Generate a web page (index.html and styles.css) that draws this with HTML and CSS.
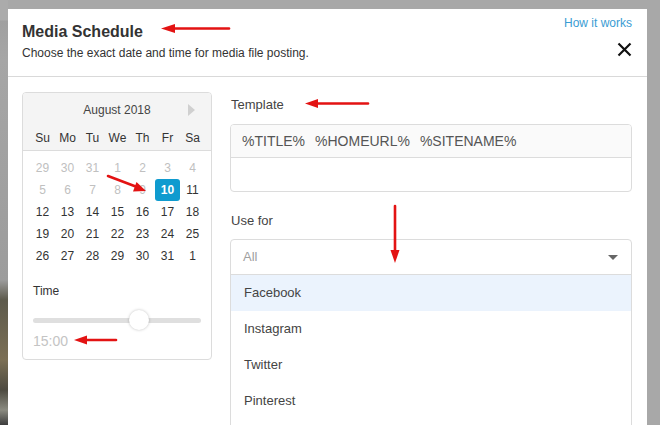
FILE: index.html
```html
<!DOCTYPE html>
<html>
<head>
<meta charset="utf-8">
<link rel="stylesheet" href="styles.css">
</head>
<body>
<div class="screen">
  <div class="backdrop-strip"></div>
  <div class="modal">
    <div class="modal-header">
      <div class="heading">
        <h1 class="title">Media Schedule</h1>
        <p class="subtitle">Choose the exact date and time for media file posting.</p>
      </div>
      <div class="header-actions">
        <a class="help-link">How it works</a>
        <svg class="close" width="15" height="15" viewBox="0 0 15 15"><path d="M1.5 1.5 L13.5 13.5 M13.5 1.5 L1.5 13.5" stroke="#111" stroke-width="2.2" fill="none"/></svg>
      </div>
    </div>
    <div class="modal-body">
      <div class="calendar">
        <div class="cal-head">
          <div class="cal-month">August 2018<span class="cal-next"></span></div>
          <div class="cal-row cal-dow">
            <span>Su</span><span>Mo</span><span>Tu</span><span>We</span><span>Th</span><span>Fr</span><span>Sa</span>
          </div>
        </div>
        <div class="cal-days">
          <div class="cal-row"><span class="muted">29</span><span class="muted">30</span><span class="muted">31</span><span class="muted">1</span><span class="muted">2</span><span class="muted">3</span><span class="muted">4</span></div>
          <div class="cal-row"><span class="muted">5</span><span class="muted">6</span><span class="muted">7</span><span class="muted">8</span><span class="muted">9</span><span class="selected">10</span><span>11</span></div>
          <div class="cal-row"><span>12</span><span>13</span><span>14</span><span>15</span><span>16</span><span>17</span><span>18</span></div>
          <div class="cal-row"><span>19</span><span>20</span><span>21</span><span>22</span><span>23</span><span>24</span><span>25</span></div>
          <div class="cal-row"><span>26</span><span>27</span><span>28</span><span>29</span><span>30</span><span>31</span><span>1</span></div>
        </div>
        <div class="time">
          <div class="time-label">Time</div>
          <div class="slider"><div class="track"></div><div class="thumb"></div></div>
          <div class="time-value">15:00</div>
        </div>
      </div>
      <div class="form">
        <div class="field-label">Template</div>
        <div class="template-box">
          <div class="template-tags"><span>%TITLE%</span><span>%HOMEURL%</span><span>%SITENAME%</span></div>
          <div class="template-input"></div>
        </div>
        <div class="field-label use-for">Use for</div>
        <div class="select">
          <div class="select-value">All<span class="caret"></span></div>
          <ul class="options">
            <li class="active">Facebook</li>
            <li>Instagram</li>
            <li>Twitter</li>
            <li>Pinterest</li>
          </ul>
        </div>
      </div>
    </div>
  </div>
  <svg class="annotations" width="660" height="425" viewBox="0 0 660 425">
    <g stroke="#e31313" stroke-width="2.6" fill="#e31313" stroke-linecap="round">
      <line x1="229" y1="28.5" x2="172" y2="28.5"/>
      <polygon points="161,28.5 175,24 175,33" stroke="none"/>
      <line x1="108" y1="176" x2="137" y2="187"/>
      <polygon points="146,191 133,191.5 136.5,182" stroke="none"/>
      <line x1="116" y1="340" x2="84" y2="340"/>
      <polygon points="74,340 87,335.5 87,344.5" stroke="none"/>
      <line x1="368" y1="103.5" x2="315" y2="103.5"/>
      <polygon points="305,103.5 318,99 318,108" stroke="none"/>
      <line x1="395" y1="206" x2="395" y2="252"/>
      <polygon points="395,263 390.5,250 399.5,250" stroke="none"/>
    </g>
  </svg>
</div>
</body>
</html>
```
FILE: styles.css
```css
* { box-sizing: border-box; }
html, body { margin: 0; padding: 0; }
body {
  width: 660px;
  height: 425px;
  overflow: hidden;
  background: #a8a8a8;
  font-family: "Liberation Sans", Arial, sans-serif;
  color: #333;
}
.screen {
  position: relative;
  display: flex;
  width: 660px;
  height: 425px;
  padding-top: 9px;
}
.backdrop-strip {
  width: 8px;
  margin-top: -9px;
  background: linear-gradient(to bottom, #ababab 0, #ababab 20px, #a0a0a0 21px, #a6a6a6 60px, #9c9c9c 280px, #5d5a4c 300px, #7b6f55 360px, #4d4a40 390px, #8a8a80 410px, #3c3c3c 425px);
}
.modal {
  width: 639px;
  height: 416px;
  background: #fff;
  overflow: hidden;
}
.modal-header {
  display: flex;
  justify-content: space-between;
  height: 68px;
  padding: 13px 15px 0 14px;
  border-bottom: 1px solid #d9d9d9;
}
.title {
  margin: 0;
  font-size: 16px;
  font-weight: bold;
  color: #333;
  line-height: 19px;
}
.subtitle {
  margin: 5px 0 0;
  font-size: 12px;
  color: #333;
  line-height: 14px;
}
.header-actions {
  display: flex;
  flex-direction: column;
  align-items: flex-end;
}
.help-link {
  font-size: 12px;
  color: #3a9cd3;
  line-height: 14px;
  margin-top: -6px;
}
.close { margin-top: 12px; }

.modal-body {
  display: flex;
  gap: 18px;
  padding: 15px 15px 0 14px;
}
.calendar {
  width: 190px;
  height: 268px;
  border: 1px solid #dcdcdc;
  border-radius: 4px;
  flex-shrink: 0;
  overflow: hidden;
}
.cal-head {
  background: #f4f4f4;
  border-bottom: 1px solid #dcdcdc;
  padding: 0 7px;
}
.cal-month {
  position: relative;
  height: 34px;
  line-height: 34px;
  text-align: center;
  font-size: 12px;
  color: #444;
}
.cal-next {
  position: absolute;
  right: 9px;
  top: 11px;
  width: 0; height: 0;
  border-top: 6.5px solid transparent;
  border-bottom: 6.5px solid transparent;
  border-left: 7px solid #d0d0d0;
}
.cal-row {
  display: grid;
  grid-template-columns: repeat(7, 25px);
}
.cal-row span {
  height: 22px;
  line-height: 22px;
  text-align: center;
  font-size: 12px;
  color: #333;
}
.cal-dow { height: 23px; }
.cal-dow span { color: #333; }
.cal-days { padding: 6px 7px 0; }
.cal-row span.muted { color: #c0c0c0; }
.cal-row span.selected {
  background: #0f9bcf;
  color: #fff;
  font-weight: bold;
  border-radius: 3px;
}
.time { padding: 17px 10px 0 10px; }
.time-label {
  font-size: 12px;
  color: #333;
  line-height: 14px;
}
.slider {
  position: relative;
  height: 20px;
  margin-top: 12px;
}
.track {
  position: absolute;
  left: 0; right: 0;
  top: 8px;
  height: 5px;
  border-radius: 3px;
  background: #dfdfdf;
}
.thumb {
  position: absolute;
  left: 96px;
  top: 0;
  width: 20px;
  height: 20px;
  border-radius: 50%;
  background: #fff;
  box-shadow: 0 0 3px rgba(0,0,0,0.25);
}
.time-value {
  margin-top: 3px;
  font-size: 14px;
  color: #c4c4c4;
  line-height: 16px;
}

.form { flex: 1; }
.field-label {
  font-size: 13px;
  color: #444;
  line-height: 15px;
  padding-left: 1px;
  margin-top: 5px;
}
.template-box {
  margin-top: 12px;
  border: 1px solid #dcdcdc;
  border-radius: 4px;
  height: 68px;
  overflow: hidden;
}
.template-tags {
  display: flex;
  gap: 10px;
  height: 33px;
  padding: 0 11px;
  align-items: center;
  background: #fafafa;
  border-bottom: 1px solid #dcdcdc;
  font-size: 14px;
  color: #555;
}
.field-label.use-for { margin-top: 21px; }
.select {
  margin-top: 11px;
  border: 1px solid #dcdcdc;
  border-radius: 4px;
  height: 200px;
}
.select-value {
  position: relative;
  height: 35px;
  line-height: 34px;
  padding-left: 12px;
  font-size: 13px;
  color: #a0a0a0;
  border-bottom: 1px solid #dcdcdc;
}
.caret {
  position: absolute;
  right: 13px;
  top: 15px;
  width: 0; height: 0;
  border-left: 5px solid transparent;
  border-right: 5px solid transparent;
  border-top: 5px solid #666;
}
.options {
  list-style: none;
  margin: 0;
  padding: 0;
}
.options li {
  height: 36px;
  line-height: 36px;
  padding-left: 13px;
  font-size: 13px;
  color: #444;
}
.options li.active { background: #ebf3fd; }
.annotations {
  position: absolute;
  left: 0; top: 0;
  pointer-events: none;
}
```
